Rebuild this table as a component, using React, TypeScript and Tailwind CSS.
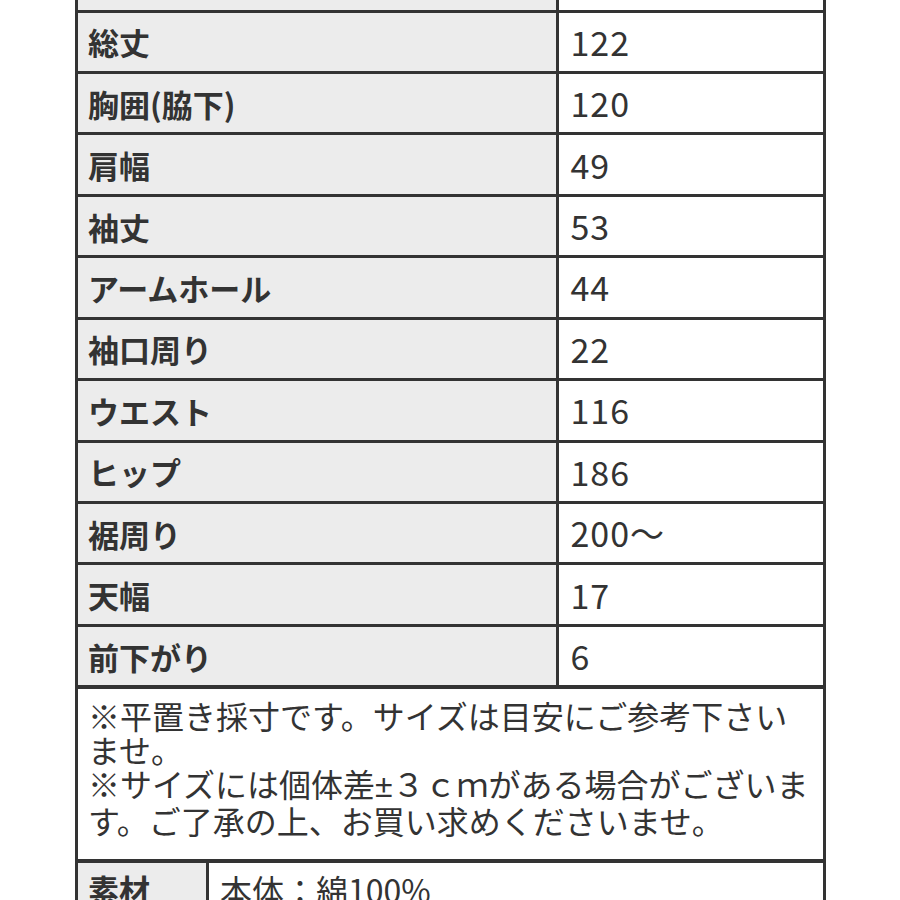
const rows = [
  ["総丈", "122"],
  ["胸囲(脇下)", "120"],
  ["肩幅", "49"],
  ["袖丈", "53"],
  ["アームホール", "44"],
  ["袖口周り", "22"],
  ["ウエスト", "116"],
  ["ヒップ", "186"],
  ["裾周り", "200〜"],
  ["天幅", "17"],
  ["前下がり", "6"],
]

const font = { fontFamily: '"Noto Sans CJK JP", "Noto Sans", sans-serif' }

export default function App() {
  return (
    <div className="w-[900px] h-[900px] overflow-hidden bg-white text-[#333]" style={font}>
      <div className="ml-[75px] w-[751px]">
        {/* サイズ表 */}
        <div className="border-x-[3px] border-[#333]">
          <div className="flex h-[9.5px]">
            <div className="w-[480.5px] bg-[#ececec] border-r-[3px] border-[#333]"></div>
            <div className="flex-1"></div>
          </div>
          {rows.map(([label, value]) => (
            <div key={label} className="flex h-[61.45px] border-t-[3px] border-[#333]">
              <div className="w-[480.5px] bg-[#ececec] border-r-[3px] border-[#333] flex items-center pl-[10px] text-[31px] font-bold leading-none whitespace-nowrap">
                {label}
              </div>
              <div className="flex-1 flex items-center pl-[12px] text-[34px] tracking-[1px] leading-none">
                {value}
              </div>
            </div>
          ))}
        </div>

        {/* 注意書き */}
        <div className="h-[174px] border-x-[3px] border-t-4 border-[#333] pl-[10px] pt-[9px] text-[32px] leading-[34px] whitespace-nowrap">
          ※平置き採寸です。サイズは目安にご参考下さい<br />
          ませ。<br />
          ※サイズには個体差<span className="font-['Liberation_Sans']">±</span>３ｃｍがある場合がございま<br />
          す。ご了承の上、お買い求めくださいませ。
        </div>

        {/* 素材 */}
        <div className="flex h-[80px] border-x-[3px] border-t-4 border-[#333]">
          <div className="w-[131px] bg-[#ececec] border-r-[3px] border-[#333] pl-[10px] pt-[10px] text-[31px] font-bold leading-none">
            素材
          </div>
          <div className="flex-1 pl-[11px] pt-[10px] text-[32px] leading-none whitespace-nowrap">
            本体：綿100%
          </div>
        </div>
      </div>
    </div>
  )
}
